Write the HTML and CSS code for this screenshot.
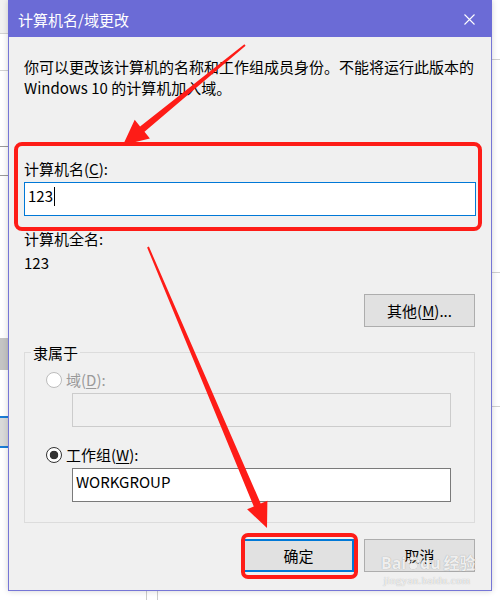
FILE: index.html
```html
<!DOCTYPE html>
<html lang="zh-CN">
<head>
    <meta charset="UTF-8">
    <meta name="viewport" content="width=device-width, initial-scale=1.0">
    <title>计算机名/域更改</title>
    <link rel="stylesheet" href="styles.css">
</head>
<body>
    <div class="screen">
        <div class="dialog">
            <div class="titlebar">
                <span class="title">计算机名/域更改</span>
                <svg class="close" width="11" height="11" viewBox="0 0 11 11">
                    <path d="M0.5 0.5 L10.5 10.5 M10.5 0.5 L0.5 10.5" stroke="#fff" stroke-width="1.1" fill="none"/>
                </svg>
            </div>

            <div class="body">
                <p class="intro">你可以更改该计算机的名称和工作组成员身份。不能将运行此版本的<br>Windows 10 的计算机加入域。</p>

                <div class="label name-label">计算机名(<u>C</u>):</div>
                <div class="textbox focus">123<span class="caret"></span></div>

                <div class="label full-label">计算机全名:</div>
                <div class="value">123</div>

                <div class="row-end">
                    <button class="btn">其他(<u>M</u>)...</button>
                </div>

                <fieldset class="member">
                    <legend>隶属于</legend>
                    <div class="radio-row disabled"><span class="radio"></span>域(<u>D</u>):</div>
                    <div class="textbox sub disabled"></div>
                    <div class="radio-row work-row"><span class="radio on"></span>工作组(<u>W</u>):</div>
                    <div class="textbox sub">WORKGROUP</div>
                </fieldset>

                <div class="actions">
                    <button class="btn default">确定</button>
                    <button class="btn">取消</button>
                </div>
            </div>
        </div>

        <!-- red annotations drawn on top of the dialog -->
        <div class="mark mark-name"></div>
        <div class="mark mark-ok"></div>
        <svg class="arrows" width="500" height="600" viewBox="0 0 500 600">
            <polygon points="245.6,45.8 144.5,131.8 149.9,138.4 123,145 134.7,119.8 140.1,126.4 244.4,44.2" fill="#fe1c17"/>
            <polygon points="147.1,247.4 253.8,506.5 247.1,509.3 267,528 267.4,500.7 260.7,503.5 148.9,246.6" fill="#fe1c17"/>
        </svg>

        <div class="watermark">
            <div class="wm-logo">Bai<svg class="paw" width="14" height="14" viewBox="0 0 16 16">
                <circle cx="3" cy="6" r="2.2"/><circle cx="6.5" cy="2.8" r="2.2"/><circle cx="10.5" cy="2.8" r="2.2"/><circle cx="13.5" cy="6" r="2.2"/>
                <ellipse cx="8.2" cy="11.5" rx="4.6" ry="3.8"/>
            </svg>du<span class="wm-cn">经验</span></div>
            <div class="wm-url">jingyan.baidu.com</div>
        </div>
    </div>
</body>
</html>
```

FILE: styles.css
```css
body {
    margin: 0;
    font-family: "Noto Sans CJK SC", "Noto Sans", sans-serif;
    font-size: 15px;
    color: #000;
}

/* window behind the dialog, only its edges show */
.screen {
    position: relative;
    width: 500px;
    height: 600px;
    overflow: hidden;
    background:
        linear-gradient(#f1f1f1, #f1f1f1) 0 0 / 8px 33px no-repeat,
        linear-gradient(#d2d2d2, #d2d2d2) 0 33px / 8px 1px no-repeat,
        linear-gradient(#d2d2d2, #d2d2d2) 0 70px / 8px 1px no-repeat,
        linear-gradient(#9a9a9a, #9a9a9a) 0 146px / 8px 1px no-repeat,
        linear-gradient(#9a9a9a, #9a9a9a) 0 175px / 8px 1px no-repeat,
        linear-gradient(#c4c4c4, #c4c4c4) 0 338px / 8px 32px no-repeat,
        linear-gradient(#1b7cd6, #1b7cd6) 0 416px / 8px 2px no-repeat,
        linear-gradient(#d9d9d9, #d9d9d9) 0 418px / 8px 28px no-repeat,
        linear-gradient(#1b7cd6, #1b7cd6) 0 446px / 8px 2px no-repeat,
        linear-gradient(#d0d0d0, #d0d0d0) 492px 59px / 8px 1px no-repeat,
        linear-gradient(#d0d0d0, #d0d0d0) 492px 272px / 8px 1px no-repeat,
        linear-gradient(#d0d0d0, #d0d0d0) 492px 406px / 8px 1px no-repeat,
        linear-gradient(#cccccc, #cccccc) 146px 591px / 1px 9px no-repeat,
        linear-gradient(#cccccc, #cccccc) 157px 591px / 1px 9px no-repeat,
        #fff;
}

.dialog {
    box-sizing: border-box;
    width: 484px;
    height: 591px;
    margin-left: 8px;
    background-color: #f0f0f0;
    border: 1px solid #7676d6;
    border-top: none;
    box-shadow: 0 0 6px rgba(0, 0, 0, 0.18);
}

.titlebar {
    display: flex;
    align-items: center;
    justify-content: space-between;
    height: 37px;
    margin: 0 -1px;
    padding: 2px 17px 0 10px;
    box-sizing: border-box;
    background-color: #6b6bd6;
    color: #fff;
}

.title {
    line-height: 22px;
}

.body {
    padding: 19px 15px 0 15px;
}

.intro {
    margin: 0;
    line-height: 21px;
    white-space: nowrap;
}

.label,
.value {
    line-height: 21px;
}

.name-label {
    margin-top: 60px;
}

.full-label {
    margin-top: 12px;
}

.value {
    margin-top: 3px;
}

u {
    text-decoration-thickness: 1px;
    text-underline-offset: 2px;
}

.textbox {
    box-sizing: border-box;
    height: 34px;
    padding: 0 3px;
    line-height: 26px;
    background-color: #fff;
    border: 1px solid #7a7a7a;
    white-space: nowrap;
}

.textbox.focus {
    margin-top: 3px;
    border-color: #0078d7;
}

.caret {
    display: inline-block;
    width: 1px;
    height: 19px;
    margin-left: 1px;
    vertical-align: -4px;
    background-color: #000;
}

.btn {
    box-sizing: border-box;
    width: 111px;
    height: 33px;
    padding: 0;
    font-family: inherit;
    font-size: 15px;
    color: #000;
    background-color: #e1e1e1;
    border: 1px solid #adadad;
}

.btn.default {
    border: 2px solid #0078d7;
}

.row-end {
    display: flex;
    justify-content: flex-end;
    margin-top: 21px;
    padding-right: 1px;
}

.member {
    margin: 15px 1px 0 0;
    padding: 0 0 20px 0;
    min-width: 0;
    border: 1px solid #dcdcdc;
}

.member legend {
    margin-left: 6px;
    padding: 0 2px;
    line-height: 21px;
}

.radio-row {
    display: flex;
    align-items: center;
    margin-top: 6px;
    padding-left: 21px;
    line-height: 21px;
}

.radio-row.work-row {
    margin-top: 17px;
}

.radio-row.disabled {
    color: #9a9a9a;
}

.radio {
    box-sizing: border-box;
    width: 16px;
    height: 16px;
    margin-right: 4px;
    border: 1px solid #333;
    border-radius: 50%;
    background-color: #fff;
}

.radio.on {
    background: radial-gradient(circle, #333 0 4px, #fff 4.6px);
}

.disabled .radio {
    border-color: #bcbcbc;
}

.textbox.sub {
    width: 379px;
    margin: 3px 0 0 47px;
}

.textbox.sub.disabled {
    background-color: #f0f0f0;
    border-color: #cccccc;
}

.actions {
    display: flex;
    justify-content: flex-end;
    gap: 10px;
    margin-top: 16px;
    padding-right: 1px;
}

/* annotations */
.mark {
    position: absolute;
    box-sizing: border-box;
    border: 4px solid #fe1c17;
    border-radius: 8px;
}

.mark-name {
    left: 14px;
    top: 142px;
    width: 468px;
    height: 89px;
}

.mark-ok {
    left: 241px;
    top: 533px;
    width: 117px;
    height: 46px;
    border-radius: 7px;
}

.arrows {
    position: absolute;
    left: 0;
    top: 0;
    pointer-events: none;
}

.watermark {
    position: absolute;
    left: 381px;
    top: 551px;
    width: 92px;
    text-align: center;
    color: rgba(255, 255, 255, 0.85);
    text-shadow: 0 0 1px rgba(0, 0, 0, 0.35);
}

.wm-logo {
    font-family: "Noto Sans", "Noto Sans CJK SC", sans-serif;
    font-size: 16px;
    font-weight: bold;
    line-height: 22px;
    white-space: nowrap;
}

.wm-cn {
    margin-left: 3px;
    font-family: "Noto Sans CJK SC", sans-serif;
}

.paw {
    fill: rgba(255, 255, 255, 0.85);
    vertical-align: -1px;
    filter: drop-shadow(0 0 0.5px rgba(0, 0, 0, 0.4));
}

.wm-url {
    font-family: "Liberation Serif", serif;
    font-size: 11px;
    line-height: 12px;
    letter-spacing: 0.3px;
}
```
